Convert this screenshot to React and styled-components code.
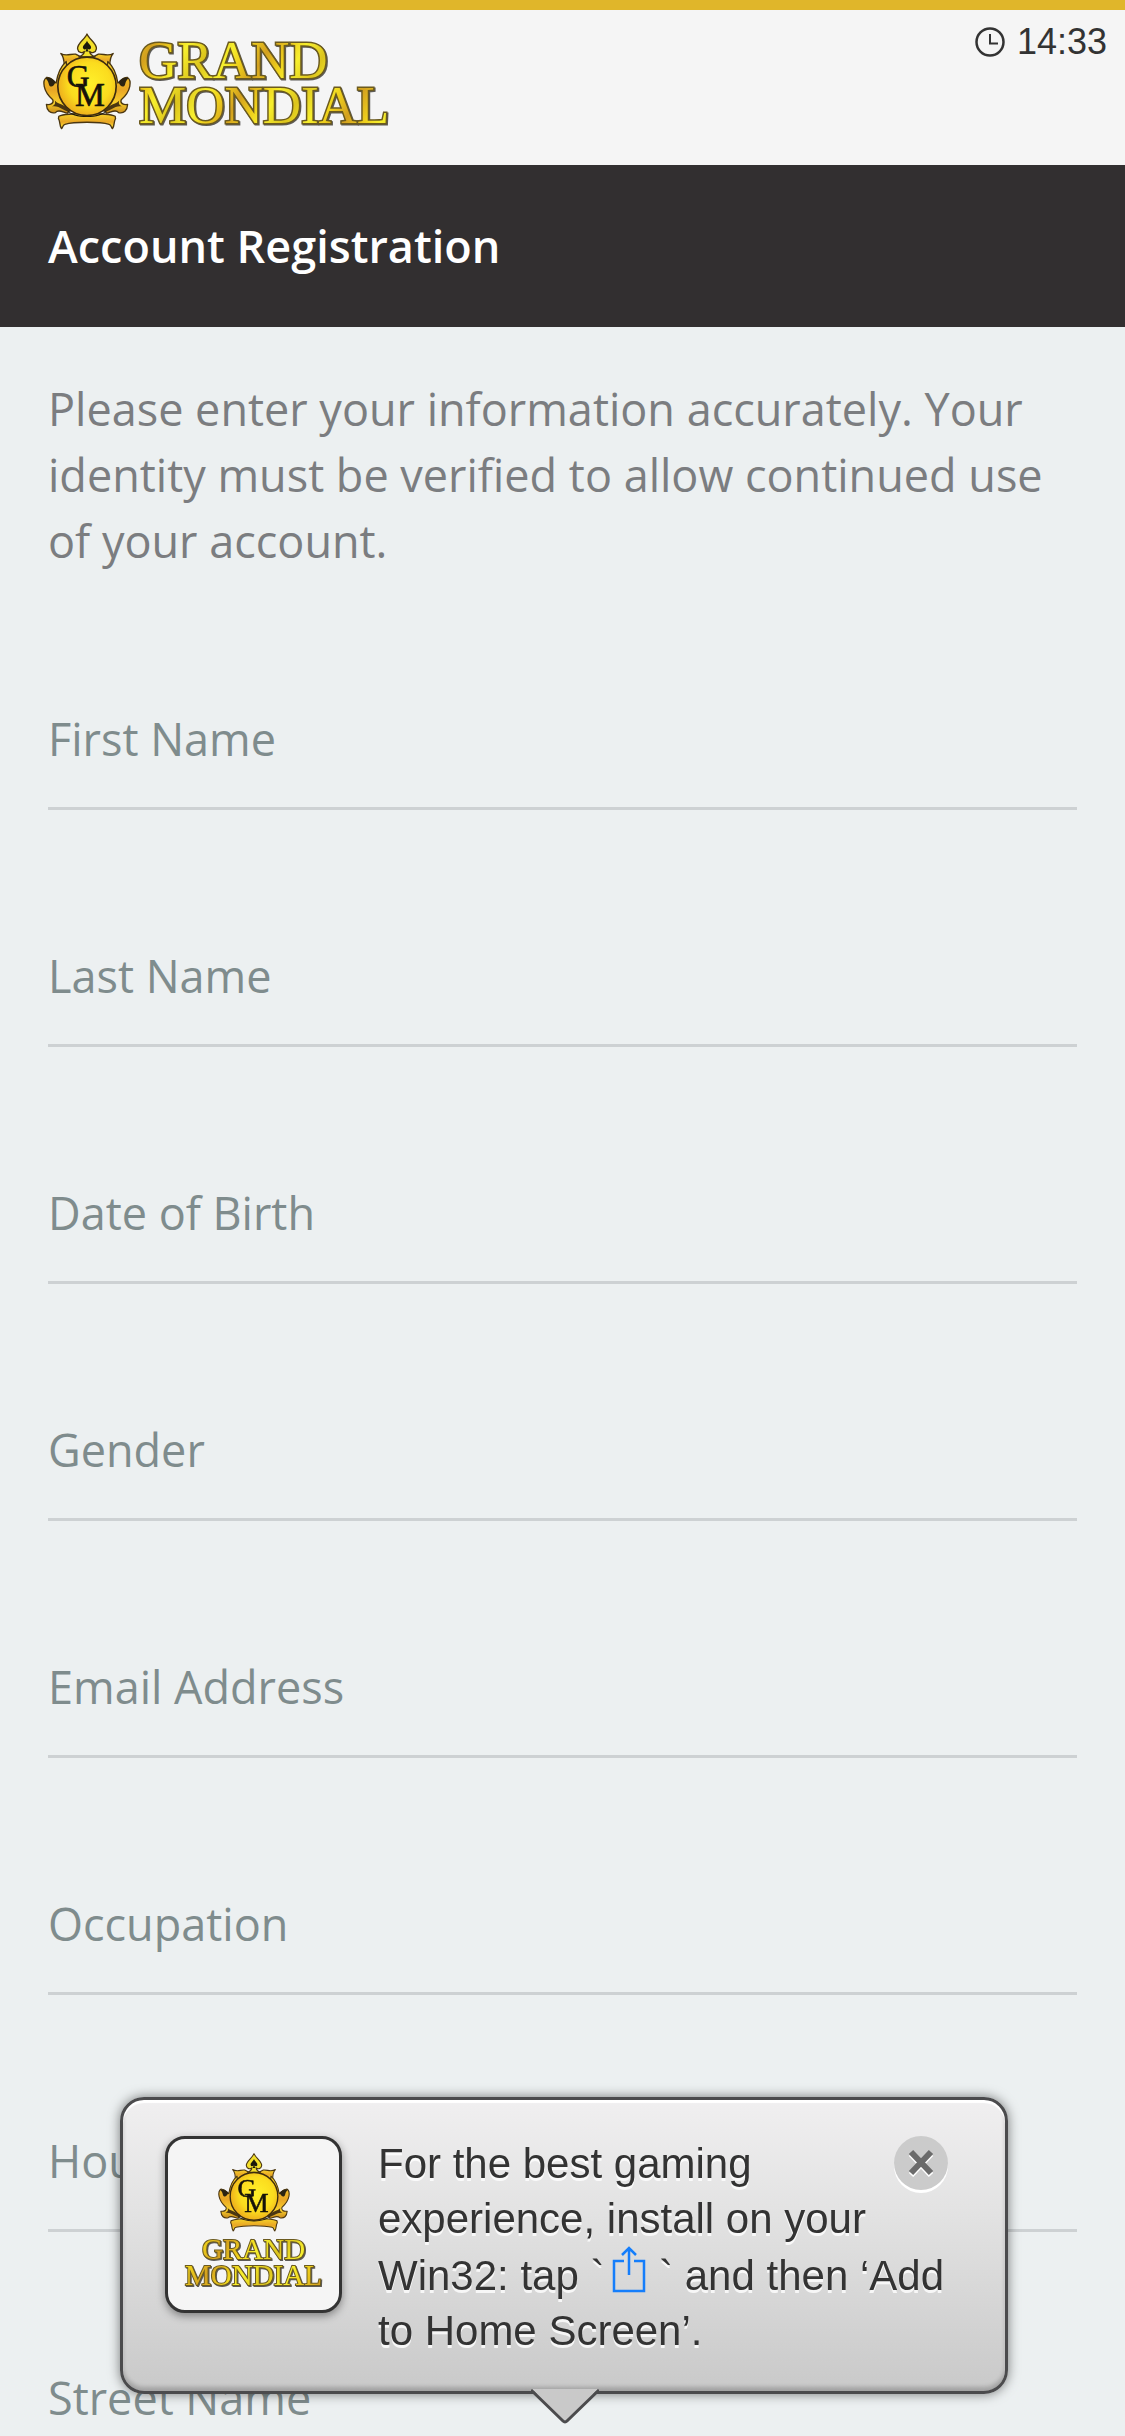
import React from 'react';
import styled, { createGlobalStyle } from 'styled-components';

const colors = {
    gold: '#e0b62a',
    header: '#f5f5f5',
    charcoal: '#322f30',
    page: '#ecf0f1',
    copy: '#7b7d80',
    label: '#7f8c8d',
    line: '#cdd1d3',
    dark: '#333333',
    blue: '#157efb'
};

const GlobalStyle = createGlobalStyle`
    body {
        margin: 0;
        background-color: ${colors.page};
        font-family: "Open Sans", "Noto Sans", sans-serif;
    }
`;

const Page = styled.div`
    display: flex;
    flex-direction: column;
    height: 100vh;
    overflow: hidden;
`;

const Header = styled.header`
    display: flex;
    justify-content: space-between;
    align-items: flex-start;
    flex: none;
    box-sizing: border-box;
    height: 165px;
    padding: 10px 18px 0 42px;
    border-top: 10px solid ${colors.gold};
    background-color: ${colors.header};
`;

const HomeLink = styled.a`
    display: block;
    padding-top: 10px;
    line-height: 0;
`;

const Clock = styled.div`
    display: flex;
    align-items: center;
    gap: 12px;
    font-family: "Liberation Sans", Arial, sans-serif;
    font-size: 36px;
    line-height: 44px;
    color: ${colors.dark};
`;

const TitleBar = styled.div`
    display: flex;
    align-items: center;
    flex: none;
    height: 162px;
    padding: 0 48px;
    background-color: ${colors.charcoal};
`;

const Title = styled.h1`
    margin: 0;
    font-size: 45px;
    font-weight: 600;
    line-height: 66px;
    color: white;
`;

const Content = styled.main`
    flex: 1;
    min-height: 0;
    padding: 49px 48px 0;
    overflow-y: auto;
    scrollbar-width: none;
`;

const Intro = styled.p`
    margin: 0;
    font-size: 45px;
    line-height: 66px;
    color: ${colors.copy};
`;

const Form = styled.form`
    display: grid;
    gap: 100px;
    padding: 99px 0 60px;
`;

const FieldRow = styled.div`
    display: grid;
    height: 137px;
`;

const Label = styled.label`
    grid-area: 1 / 1;
    align-self: end;
    padding-bottom: 38px;
    font-size: 45px;
    line-height: 66px;
    color: ${colors.label};
    pointer-events: none;
`;

const Control = styled.input`
    grid-area: 1 / 1;
    box-sizing: border-box;
    width: 100%;
    height: 100%;
    padding: 0;
    border: none;
    border-bottom: 3px solid ${colors.line};
    border-radius: 0;
    outline: none;
    appearance: none;
    background-color: transparent;
    font: inherit;
    font-size: 45px;
    color: ${colors.dark};
`;

const Balloon = styled.aside`
    position: fixed;
    left: 120px;
    right: 117px;
    bottom: 42px;
    display: flex;
    align-items: flex-start;
    gap: 36px;
    box-sizing: border-box;
    min-height: 297px;
    padding: 36px 44px 30px 42px;
    border: 3px solid #4b4b4d;
    border-radius: 24px;
    background-image: linear-gradient(#f0eff0, #e2e2e2 40%, #c9c9c9);
    box-shadow: 0 0 12px rgba(0, 0, 0, 0.5), inset 0 3px 1px white, inset 0 -4px 4px rgba(0, 0, 0, 0.2);
`;

const Arrow = styled.svg`
    position: absolute;
    left: 50%;
    top: 100%;
    margin: -2px 0 0 -33px;
`;

const AppIcon = styled.div`
    flex: none;
    box-sizing: border-box;
    width: 177px;
    height: 177px;
    border: 3px solid ${colors.dark};
    border-radius: 20px;
    background-color: ${colors.header};
    box-shadow: 0 3px 9px rgba(0, 0, 0, 0.4);
`;

const Message = styled.p`
    flex: 1;
    margin: 0;
    font-family: "Liberation Sans", Arial, sans-serif;
    font-size: 42px;
    line-height: 55px;
    color: ${colors.dark};
    text-shadow: 0 3px 0 rgba(255, 255, 255, 0.8);
`;

const ShareIcon = styled.svg`
    margin: 0 1px 0 8px;
    vertical-align: -3px;
`;

const CloseButton = styled.button`
    position: absolute;
    top: 36px;
    right: 57px;
    display: flex;
    align-items: center;
    justify-content: center;
    width: 54px;
    height: 54px;
    padding: 0;
    border: none;
    border-radius: 50%;
    background-color: #cbcbcb;
    box-shadow: 0 3px 0 white;
    cursor: pointer;
`;

const LogoText = styled.text`
    font-family: "Liberation Serif", "Times New Roman", serif;
    font-size: ${props => props.$small ? '29px' : '53px'};
    fill: url(#lettering);
    stroke: #6b5a1e;
    stroke-width: ${props => props.$small ? '2px' : '3px'};
    paint-order: stroke;
    filter: drop-shadow(1px 1px 0 #5d5b58);
`;

const fields = [
    { id: 'firstName', label: 'First Name' },
    { id: 'lastName', label: 'Last Name' },
    { id: 'birthDate', label: 'Date of Birth' },
    { id: 'gender', label: 'Gender', options: ['Female', 'Male'] },
    { id: 'email', label: 'Email Address', type: 'email' },
    { id: 'occupation', label: 'Occupation' },
    { id: 'house', label: 'House Number' },
    { id: 'street', label: 'Street Name' }
];

const GradientSheet = styled.svg`
    position: absolute;
`;

const GoldGradients = () => (
    <GradientSheet width="0" height="0" aria-hidden="true">
        <defs>
            <linearGradient id="lettering" x1="0" y1="0" x2="44" y2="26" gradientUnits="userSpaceOnUse" spreadMethod="reflect">
                <stop offset="0" stopColor="#d3a01f" />
                <stop offset="0.35" stopColor="#efd01c" />
                <stop offset="0.6" stopColor="#f7ef2e" />
                <stop offset="1" stopColor="#dcc41c" />
            </linearGradient>
            <radialGradient id="coin" cx="0.55" cy="0.45" r="0.6">
                <stop offset="0" stopColor="#fff02a" />
                <stop offset="0.6" stopColor="#fbdc1e" />
                <stop offset="1" stopColor="#eba51c" />
            </radialGradient>
            <linearGradient id="leaf" x1="0" y1="0" x2="0" y2="1">
                <stop offset="0" stopColor="#f6d52a" />
                <stop offset="0.55" stopColor="#e9a625" />
                <stop offset="0.8" stopColor="#f8cf2b" />
                <stop offset="1" stopColor="#c98a1c" />
            </linearGradient>
        </defs>
    </GradientSheet>
);

const Leaf = () => (
    <g>
        <path
            d="M108 184 C88 202 82 222 78 248 C70 244 68 232 50 231 C36 240 38 272 68 298 C72 308 62 314 49 312 C50 330 60 340 76 336 C84 326 96 334 112 338 L124 320 Z"
            fill="url(#leaf)" stroke="#4a3611" strokeWidth="4" strokeLinejoin="round" />
        <path d="M46 234 C58 230 68 234 76 246 C70 262 58 262 56 250 C54 242 52 240 46 234 Z" fill="#2b2312" />
        <path d="M74 300 C86 314 100 306 122 334 C100 334 88 314 66 318 C76 312 76 308 74 300 Z" fill="#4a3611" />
    </g>
);

const Emblem = (props) => (
    <svg {...props} viewBox="36 96 268 292">
        <path
            d="M92 160 C108 170 122 160 136 162 L152 170 L188 170 L204 162 C218 160 232 170 248 160 C240 168 238 178 238 196 L102 196 C102 178 100 168 92 160 Z"
            fill="url(#leaf)" stroke="#4a3611" strokeWidth="4" strokeLinejoin="round" />
        <path
            d="M170 102 C176 118 200 130 198 146 C196 158 184 160 178 154 C178 162 184 166 194 170 L146 170 C156 166 162 162 162 154 C156 160 144 158 142 146 C140 130 164 118 170 102 Z"
            fill="#f3df2a" stroke="#4a3611" strokeWidth="4" strokeLinejoin="round" />
        <path
            d="M170 122 C174 132 184 136 182 144 C180 150 174 148 172 145 C172 150 174 152 176 154 L164 154 C166 152 168 150 168 145 C166 148 160 150 158 144 C156 136 166 132 170 122 Z"
            fill="#1b180c" />
        <Leaf />
        <g transform="translate(340 0) scale(-1 1)"><Leaf /></g>
        <path
            d="M86 347 C110 336 230 336 254 347 L255 354 C249 364 253 374 246 384 C241 382 244 373 236 371 C208 363 132 363 104 371 C96 373 99 382 94 384 C87 374 91 364 85 354 Z"
            fill="url(#leaf)" stroke="#4a3611" strokeWidth="4" strokeLinejoin="round" />
        <path d="M110 330 C140 352 200 352 230 330 C214 356 126 356 110 330 Z" fill="#1b180c" />
        <circle cx="170" cy="258" r="87" fill="url(#coin)" stroke="#3d2c0e" strokeWidth="5" />
        <g fontFamily="Liberation Serif, Times New Roman, serif" fill="#15120a" stroke="#15120a" strokeWidth="2">
            <text x="110" y="261" fontSize="94">G</text>
            <text x="134" y="316" fontSize="100">M</text>
        </g>
    </svg>
);

const HeaderLogo = () => (
    <svg width="352" height="116" viewBox="0 0 352 116" role="img" aria-label="Grand Mondial">
        <Emblem x="0" y="2" width="90" height="98" />
        <LogoText x="97" y="48">GRAND</LogoText>
        <LogoText x="97" y="93">MONDIAL</LogoText>
    </svg>
);

const IconLogo = () => (
    <svg width="171" height="171" viewBox="0 0 171 171" role="img" aria-label="Grand Mondial">
        <Emblem x="49" y="13" width="74" height="80" />
        <LogoText $small x="34" y="120">GRAND</LogoText>
        <LogoText $small x="17" y="146">MONDIAL</LogoText>
    </svg>
);

const Field = ({ id, label, type, options }) => (
    <FieldRow>
        {options ? (
            <Control as="select" id={id} defaultValue="">
                <option value=""></option>
                {options.map(option => <option key={option}>{option}</option>)}
            </Control>
        ) : (
            <Control id={id} type={type || 'text'} />
        )}
        <Label htmlFor={id}>{label}</Label>
    </FieldRow>
);

const InstallBalloon = () => (
    <Balloon>
        <AppIcon><IconLogo /></AppIcon>
        <Message>
            For the best gaming experience, install on your Win32: tap `
            <ShareIcon width="34" height="47" viewBox="0 0 34 47" fill="none" stroke={colors.blue} strokeWidth="3" aria-label="Share">
                <path d="M12 15 H2 V45 H32 V15 H22" strokeWidth="2.500" />
                <path d="M17 29 V2 M10 9 L17 2 L24 9" strokeWidth="2.500" />
            </ShareIcon>
            {' '}` and then ‘Add to Home Screen’.
        </Message>
        <CloseButton type="button" aria-label="Close">
            <svg width="26" height="28" viewBox="0 0 26 28" fill="none" strokeWidth="6">
                <path d="M3 5 L23 26 M23 5 L3 26" stroke="white" />
                <path d="M3 3 L23 24 M23 3 L3 24" stroke="#6b6b6b" />
            </svg>
        </CloseButton>
        <Arrow width="68" height="36" viewBox="0 0 68 36" aria-hidden="true">
            <path d="M1 0 L32 32 Q34 34 36 32 L67 0 Z" fill="#c9c9c9" />
            <path d="M0 1 L32 32 Q34 34 36 32 L68 1" fill="none" stroke="#4b4b4d" strokeWidth="3" />
        </Arrow>
    </Balloon>
);

const App = () => (
    <Page>
        <GlobalStyle />
        <GoldGradients />
        <Header>
            <HomeLink href="#home"><HeaderLogo /></HomeLink>
            <Clock>
                <svg width="30" height="30" viewBox="0 0 30 30" fill="none" stroke={colors.dark} aria-hidden="true">
                    <circle cx="15" cy="15" r="13.500" strokeWidth="2.500" />
                    <path d="M15 7 V16.500 H23" strokeWidth="2" />
                </svg>
                <time>14:33</time>
            </Clock>
        </Header>
        <TitleBar>
            <Title>Account Registration</Title>
        </TitleBar>
        <Content>
            <Intro>
                Please enter your information accurately. Your identity must be verified to allow
                continued use of your account.
            </Intro>
            <Form>
                {fields.map(field => <Field key={field.id} {...field} />)}
            </Form>
        </Content>
        <InstallBalloon />
    </Page>
);

export default App;
